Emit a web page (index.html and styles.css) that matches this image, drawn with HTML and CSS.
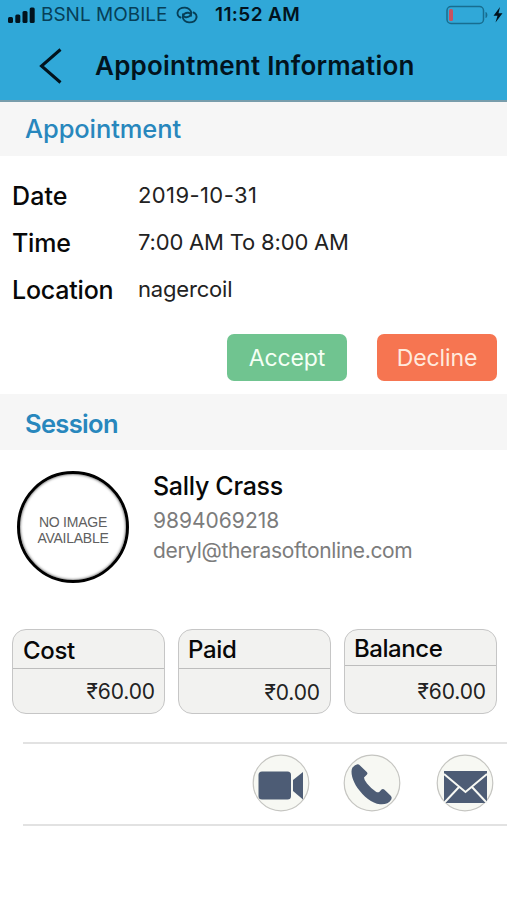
FILE: index.html
```html
<!DOCTYPE html>
<html lang="en">
<head>
<meta charset="utf-8">
<title>Appointment Information</title>
<link rel="stylesheet" href="styles.css">
</head>
<body>
<header class="top">
  <div class="status">
    <svg class="signal" width="28" height="18" viewBox="0 0 28 18"><rect x="0" y="11" width="5" height="6" rx="1.5"/><rect x="7.3" y="8.500" width="5" height="8.500" rx="1.500"/><rect x="14.500" y="5" width="5" height="12" rx="1.500"/><rect x="21.700" y="1.500" width="5" height="15.500" rx="1.500"/></svg>
    <span class="carrier">BSNL MOBILE</span>
    <svg class="link" width="22" height="18" viewBox="0 0 22 18"><g fill="none" stroke="currentColor" stroke-width="1.900" stroke-linecap="round"><path d="M4.500 11.500C2 10.500 0.800 8 1.800 5.500C2.800 2.700 6 1.500 9 1.600C12.500 1.800 15.300 4.200 15.200 7.200C15 10 12.500 11.400 9.800 11.200C8 11 6.800 9.700 7 8.200"/><path d="M4.500 11.500C2 10.500 0.800 8 1.800 5.500C2.800 2.700 6 1.500 9 1.600C12.500 1.800 15.300 4.200 15.200 7.200C15 10 12.500 11.400 9.800 11.200C8 11 6.800 9.700 7 8.200" transform="rotate(180 11 9)"/></g></svg>
    <span class="clock">11:52 AM</span>
    <svg class="battery" width="58" height="20" viewBox="0 0 58 20"><rect x="1" y="1.500" width="36.500" height="17" rx="4" fill="none" stroke="#176d90" stroke-width="1.500"/><rect x="3" y="4" width="4" height="12" rx="1.500" fill="#c85260"/><path d="M39.500 7C42 7 42 13 39.500 13Z" fill="#176d90"/><path d="M54 2L47.500 10.700H51.500L49.500 17.500L56.500 8.300H52.500Z" fill="#02131d"/></svg>
  </div>
  <div class="nav">
    <svg class="back" width="24" height="36" viewBox="0 0 24 36"><path d="M21.500 1.500L2.500 18L21.500 34.500" fill="none" stroke="currentColor" stroke-width="3"/></svg>
    <h1>Appointment Information</h1>
  </div>
</header>
<main>
  <h2 class="section appointment">Appointment</h2>
  <dl class="details">
    <dt class="date">Date</dt><dd class="date-value">2019-10-31</dd>
    <dt class="time">Time</dt><dd class="time-value">7:00 AM To 8:00 AM</dd>
    <dt class="location">Location</dt><dd class="location-value">nagercoil</dd>
  </dl>
  <div class="actions"><button class="accept">Accept</button><button class="decline">Decline</button></div>
  <h2 class="section session">Session</h2>
  <section class="person">
    <div class="avatar"><span>NO IMAGE</span><span>AVAILABLE</span></div>
    <div class="contact"><h3>Sally Crass</h3><p class="number">9894069218</p><p class="email">deryl@therasoftonline.com</p></div>
  </section>
  <section class="amounts">
    <div class="card cost"><h4>Cost</h4><p>₹60.00</p></div>
    <div class="card paid"><h4>Paid</h4><p>₹0.00</p></div>
    <div class="card balance"><h4>Balance</h4><p>₹60.00</p></div>
  </section>
  <nav class="toolbar">
    <svg class="tool" width="58" height="58" viewBox="0 0 58 58"><circle cx="29" cy="29" r="27.800"/><rect class="ink" x="6.500" y="17.500" width="32.500" height="28" rx="3.500"/><path class="ink" d="M41 26L51 18V45.500L41 37Z"/></svg>
    <svg class="tool" width="58" height="58" viewBox="0 0 58 58"><circle cx="29" cy="29" r="27.800"/><path class="ink" d="M9.500 13.500Q12 10.500 14.500 10.300Q16 10.300 17 11.500L24 18.300Q25 19.500 24 20.500L21 23.500Q21 26 24 29.500Q28 34.500 33 37.700Q35 39 36.500 37.700L38.500 35.500Q40 34.500 41.500 35.700L48 42Q49.300 43.500 48.300 45.500C46 49.500 42 50.700 37 50.300C29 49.500 20.500 42.500 14.500 34C9.500 26.500 7 18 9.500 13.500Z"/></svg>
    <svg class="tool" width="58" height="58" viewBox="0 0 58 58"><circle cx="29" cy="29" r="27.800"/><rect class="ink" x="8" y="17" width="43" height="32"/><path class="fold" d="M8 20L29.500 38L51 20M8 49L23 33M51 49L36 33"/></svg>
  </nav>
</main>
</body>
</html>
```
FILE: styles.css
```css
* { box-sizing: border-box; }
body, h1, h2, h3, h4, p, dl, dd { margin: 0; }
body { width: 507px; height: 900px; overflow: hidden; background: #fff; color: #080808; font-family: Inter, "Liberation Sans", sans-serif; white-space: nowrap; }
svg { flex: none; }
.top { height: 102px; background: #30a8d8; border-bottom: 2px solid #789dab; color: #02131d; }
.status { height: 29px; display: flex; align-items: center; padding: 0 3px 0 8px; }
.signal { margin-right: 5px; fill: currentColor; }
.carrier { width: 126px; font-size: 19px; color: #073f57; letter-spacing: 0; }
.link { margin-left: 9px; color: #073f57; }
.clock { margin-left: 17px; font-size: 19px; font-weight: 600; letter-spacing: 0.4px; }
.battery { margin-left: auto; }
.nav { height: 73px; display: flex; align-items: center; padding-left: 39px; }
.back { margin-right: 32px; }
h1 { font-size: 26px; font-weight: 600; letter-spacing: 0.22px; }
.section { height: 54px; line-height: 54px; padding-left: 25px; background: #f6f6f6; color: #2887bd; font-size: 25.500px; font-weight: 500; letter-spacing: -0.1px; }
.details { display: grid; grid-template-columns: 126px 1fr; grid-template-rows: 47px 47px 48px; align-items: center; padding: 16px 0 0 12px; }
dt { font-size: 25px; font-weight: 500; letter-spacing: -0.2px; }
.date { letter-spacing: 0.1px; }
dd { padding-bottom: 2px; font-size: 22px; letter-spacing: -0.18px; color: #222; }
.date-value { letter-spacing: 0.4px; }
.actions { display: flex; justify-content: flex-end; gap: 30px; padding: 20px 10px 13px; }
button { width: 120px; height: 47px; padding: 0; border: 0; border-radius: 7px; color: #f5fff5; font: 400 23px Inter, sans-serif; letter-spacing: -0.1px; }
.accept { background: #70c490; }
.decline { background: #f67551; color: #ffeadd; }
.session { height: 56px; line-height: 59px; font-weight: 600; letter-spacing: -0.65px; }
.person { display: flex; padding: 21px 0 0 17px; }
.avatar { width: 112px; height: 112px; display: flex; flex-direction: column; align-items: center; justify-content: center; padding-top: 5px; border: 3px solid #000; border-radius: 50%; box-shadow: inset 0 0 3px #333; color: #606060; font: 14px/16px "Liberation Sans", sans-serif; letter-spacing: -0.25px; }
.contact { padding-left: 24px; }
h3 { height: 32px; line-height: 31px; font-size: 25px; font-weight: 500; letter-spacing: -0.3px; }
.contact p { height: 30px; line-height: 36px; font-size: 21px; color: #7c7c7c; }
.contact .email { letter-spacing: -0.35px; }
.amounts { display: grid; grid-template-columns: repeat(3, 153px); gap: 13px; padding: 46px 10px 0 12px; }
.card { height: 85px; border: 1px solid #c6c6c6; border-radius: 14px; background: #f2f2f0; }
h4 { height: 39px; padding-left: 10px; border-bottom: 1px solid #bdbdbd; font-size: 24px; font-weight: 500; line-height: 41px; letter-spacing: -0.35px; }
.card p { padding-right: 9px; text-align: right; font-size: 21px; line-height: 45px; letter-spacing: -0.1px; color: #222; }
.paid h4 { padding-left: 9px; line-height: 40px; }
.paid p { padding-right: 10px; line-height: 48px; }
.balance h4 { height: 36px; padding-left: 9px; line-height: 37px; letter-spacing: -0.45px; }
.balance p { padding-right: 10px; line-height: 51px; }
.toolbar { height: 84px; margin: 28px 0 0 23px; padding-left: 229px; display: flex; align-items: center; border: solid #e2e2e2; border-width: 2px 0; }
.tool { margin-right: 33px; margin-top: -2px; }
.tool:nth-child(2) { margin-right: 35px; }
.tool circle { fill: #f7f8f3; stroke: #c5c5c1; stroke-width: 1.200; }
.tool .ink { fill: #4d5c75; }
.tool .fold { fill: none; stroke: #f7f8f3; stroke-width: 2; }
```
